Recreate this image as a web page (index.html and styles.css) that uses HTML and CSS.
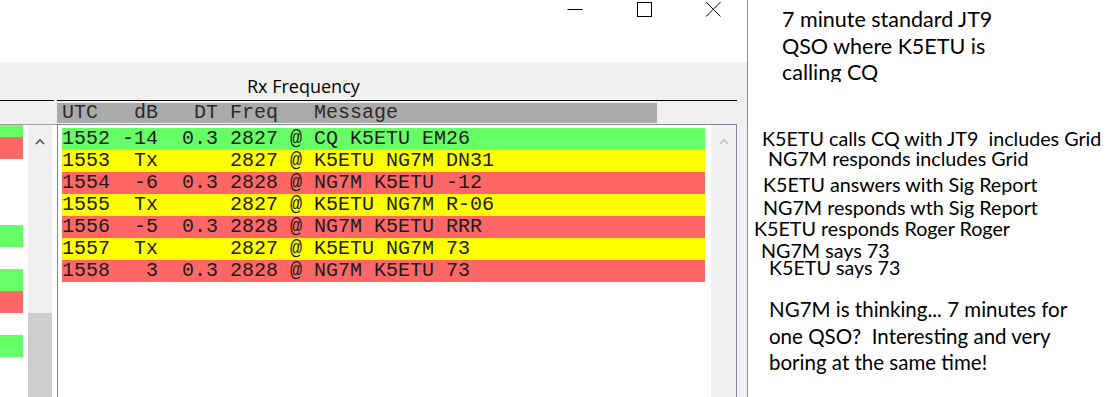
FILE: index.html
```html
<!DOCTYPE html>
<html lang="en">
<head>
    <meta charset="UTF-8">
    <title>JT9 QSO - Rx Frequency</title>
    <link rel="stylesheet" href="styles.css">
</head>
<body>
<div class="screen">
    <div class="window">
        <div class="titlebar">
            <span class="cap-btn">
                <svg width="16" height="16" viewBox="0 0 16 16"><line x1="0.5" y1="8.5" x2="15.5" y2="8.5" stroke="#000" stroke-width="1"/></svg>
            </span>
            <span class="cap-btn">
                <svg width="16" height="16" viewBox="0 0 16 16"><rect x="1.5" y="1.5" width="14" height="14" fill="none" stroke="#000" stroke-width="1"/></svg>
            </span>
            <span class="cap-btn">
                <svg width="16" height="16" viewBox="0 0 16 16"><path d="M1 1 L15.5 15.5 M15.5 1 L1 15.5" stroke="#000" stroke-width="1" fill="none"/></svg>
            </span>
        </div>
        <div class="client">
            <div class="pane pane-left">
                <div class="pane-head"></div>
                <div class="list-box left-box">
                    <div class="bars">
                        <div class="bar-list">
                            <div class="bar green"></div>
                            <div class="bar red"></div>
                            <div class="bar"></div>
                            <div class="bar"></div>
                            <div class="bar"></div>
                            <div class="bar green"></div>
                            <div class="bar"></div>
                            <div class="bar green"></div>
                            <div class="bar red"></div>
                            <div class="bar"></div>
                            <div class="bar green"></div>
                        </div>
                    </div>
                    <div class="vscroll">
                        <span class="arrow"><svg width="10" height="7" viewBox="0 0 10 7"><path d="M1 6 L5 2 L9 6" fill="none" stroke="#505050" stroke-width="1.6"/></svg></span>
                        <div class="thumb"></div>
                    </div>
                </div>
            </div>
            <div class="pane pane-right">
                <div class="pane-head"><span class="pane-title">Rx Frequency</span></div>
                <div class="col-head">UTC   dB   DT Freq   Message</div>
                <div class="list-box right-box">
                    <div class="rows">
                        <div class="row green">1552 -14  0.3 2827 @ CQ K5ETU EM26</div>
                        <div class="row yellow">1553  Tx      2827 @ K5ETU NG7M DN31</div>
                        <div class="row red">1554  -6  0.3 2828 @ NG7M K5ETU -12</div>
                        <div class="row yellow">1555  Tx      2827 @ K5ETU NG7M R-06</div>
                        <div class="row red">1556  -5  0.3 2828 @ NG7M K5ETU RRR</div>
                        <div class="row yellow">1557  Tx      2827 @ K5ETU NG7M 73</div>
                        <div class="row red">1558   3  0.3 2828 @ NG7M K5ETU 73</div>
                    </div>
                    <div class="vscroll disabled">
                        <span class="arrow"><svg width="10" height="7" viewBox="0 0 10 7"><path d="M1 6 L5 2 L9 6" fill="none" stroke="#c4c4c4" stroke-width="1.6"/></svg></span>
                    </div>
                </div>
            </div>
        </div>
    </div>
    <div class="notes">
        <div class="note-intro">
            <div>7 minute standard JT9</div>
            <div>QSO where K5ETU is</div>
            <div>calling CQ</div>
        </div>
        <div class="steps">
            <div class="step">K5ETU calls CQ with JT9 &nbsp;includes Grid</div>
            <div class="step">NG7M responds includes Grid</div>
            <div class="step">K5ETU answers with Sig Report</div>
            <div class="step">NG7M responds wth Sig Report</div>
            <div class="step">K5ETU responds Roger Roger</div>
            <div class="step">NG7M says 73</div>
            <div class="step">K5ETU says 73</div>
        </div>
        <div class="note-outro">
            <div>NG7M is thinking... 7 minutes for</div>
            <div>one QSO? &nbsp;Interesting and very</div>
            <div>boring at the same time!</div>
        </div>
    </div>
</div>
</body>
</html>
```

FILE: styles.css
```css
body { margin: 0; background: #fff; }
.screen { display: flex; height: 397px; overflow: hidden; }

.window { width: 747px; border-right: 1px solid #8c9c6c; display: flex; flex-direction: column; }
.titlebar { height: 62px; background: #fff; display: flex; justify-content: flex-end; }
.cap-btn { width: 69px; height: 20px; display: flex; justify-content: center; padding-top: 1px; }
.cap-btn svg { display: block; }

.client { flex: 1; background: #f0f0f0; display: flex; }
.pane { display: flex; flex-direction: column; }
.pane-head { height: 38px; border-bottom: 1px solid #000; }
.pane-left { width: 57px; }
.pane-left .pane-head { width: 54px; }
.pane-right { width: 680px; }
.pane-title { display: block; margin: 14px 0 0 190px; font-family: "Open Sans", sans-serif; font-size: 18px; line-height: 20px; color: #000; }

.list-box { flex: 1; background: #fff; display: flex; }
.left-box { margin-top: 23px; border-top: 1px solid #a0a0a0; }
.right-box { margin-top: 1px; border: 1px solid #828790; border-bottom: none; }

.bars { width: 23px; overflow: hidden; }
.bar-list { margin-top: -10px; }
.bar { height: 22px; }
.bar.green, .row.green { background: #66ff66; }
.bar.red, .row.red { background: #ff6666; }
.row.yellow { background: #ffff00; }

.vscroll { width: 24px; background: #f0f0f0; display: flex; flex-direction: column; }
.left-box .vscroll { margin-left: 5px; }
.right-box .vscroll { width: 25px; margin-left: auto; }
.arrow { height: 33px; display: flex; justify-content: center; align-items: center; }
.arrow svg { display: block; }
.thumb { margin-top: auto; height: 84px; background: #cdcdcd; }

.col-head { margin-top: 2px; width: 595px; height: 20px; padding-left: 5px; background: #aaaaaa; color: #2a2a2a; font-family: "Liberation Mono", "Courier New", monospace; font-size: 20px; line-height: 20px; white-space: pre; }
.rows { width: 643px; padding: 3px 0 0 4px; }
.row { height: 22px; font-family: "Liberation Mono", "Courier New", monospace; font-size: 20px; line-height: 22px; white-space: pre; color: #1c1c1c; }

.notes { flex: 1; font-family: Lato, "Open Sans", sans-serif; color: #000; }
.note-intro { margin-top: 6px; height: 76px; overflow: hidden; padding-left: 34px; font-size: 21.5px; line-height: 26.5px; }
.steps { margin-top: 47px; font-size: 19.7px; line-height: 20px; }
.step { white-space: nowrap; }
.step:nth-child(1) { padding-left: 14px; }
.step:nth-child(2) { padding-left: 20px; margin-top: 0; }
.step:nth-child(3) { padding-left: 15px; margin-top: 6px; }
.step:nth-child(4) { padding-left: 15px; margin-top: 3px; }
.step:nth-child(5) { padding-left: 6px; margin-top: 1px; }
.step:nth-child(6) { padding-left: 13px; margin-top: 2px; }
.step:nth-child(7) { padding-left: 21px; margin-top: -3px; }
.note-outro { margin-top: 18px; padding-left: 21px; font-size: 20.5px; line-height: 26.5px; }
```
